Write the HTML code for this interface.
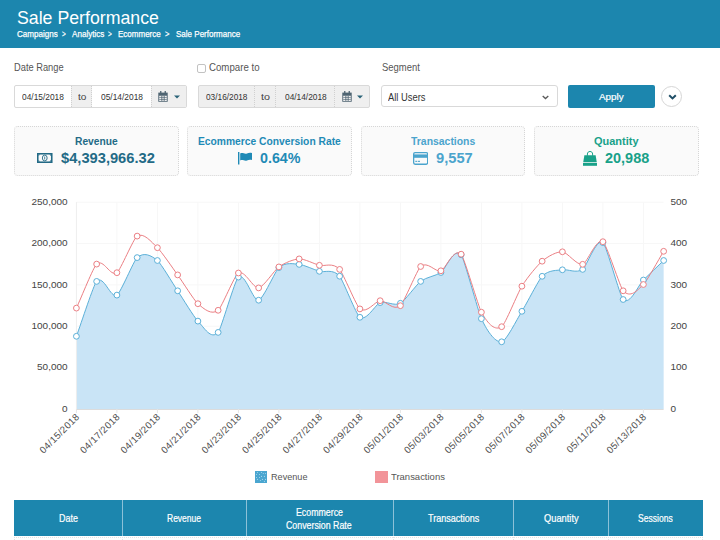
<!DOCTYPE html>
<html><head><meta charset="utf-8"><style>
*{margin:0;padding:0;box-sizing:border-box}
html,body{width:720px;height:540px;overflow:hidden;background:#fff;font-family:"Liberation Sans",sans-serif;color:#555}
.a{position:absolute;white-space:nowrap}
.b{position:absolute}
.ay{font-size:9px;fill:#444;font-family:"Liberation Sans",sans-serif}
.ax{font-size:9.6px;letter-spacing:0.35px;fill:#4d4d4d;font-family:"Liberation Sans",sans-serif}
</style></head><body>
<div class="b" style="left:0;top:0;width:720px;height:48px;background:#1c86ae"></div>

<div class="a" style="left:17.00px;top:5.00px;font-size:18.47px;line-height:25px;color:#fff;transform:scaleX(0.9606);transform-origin:0 0;">Sale Performance</div>
<div class="a" style="left:16.50px;top:27.00px;font-size:9.64px;line-height:13px;color:#fff;transform:scaleX(0.8366);transform-origin:0 0;-webkit-text-stroke:0.25px #fff;">Campaigns</div>
<div class="a" style="left:61.70px;top:27.00px;font-size:9.64px;line-height:13px;color:#fff;transform:scaleX(0.6748);transform-origin:0 0;-webkit-text-stroke:0.25px #fff;">&gt;</div>
<div class="a" style="left:71.80px;top:27.00px;font-size:9.64px;line-height:13px;color:#fff;transform:scaleX(0.8398);transform-origin:0 0;-webkit-text-stroke:0.25px #fff;">Analytics</div>
<div class="a" style="left:107.90px;top:27.00px;font-size:9.64px;line-height:13px;color:#fff;transform:scaleX(0.6748);transform-origin:0 0;-webkit-text-stroke:0.25px #fff;">&gt;</div>
<div class="a" style="left:118.30px;top:27.00px;font-size:9.64px;line-height:13px;color:#fff;transform:scaleX(0.8320);transform-origin:0 0;-webkit-text-stroke:0.25px #fff;">Ecommerce</div>
<div class="a" style="left:164.60px;top:27.00px;font-size:9.64px;line-height:13px;color:#fff;transform:scaleX(0.7814);transform-origin:0 0;-webkit-text-stroke:0.25px #fff;">&gt;</div>
<div class="a" style="left:175.70px;top:27.00px;font-size:9.64px;line-height:13px;color:#fff;transform:scaleX(0.8331);transform-origin:0 0;-webkit-text-stroke:0.25px #fff;">Sale Performance</div>
<div class="a" style="left:14.30px;top:60.00px;font-size:10.58px;line-height:14px;color:#555;transform:scaleX(0.8788);transform-origin:0 0;">Date Range</div>
<div class="b" style="left:197.3px;top:63.8px;width:8.8px;height:8.8px;border:1px solid #c2c2c2;border-radius:2px;background:#fff"></div>
<div class="a" style="left:209.10px;top:60.00px;font-size:10.58px;line-height:14px;color:#555;transform:scaleX(0.9139);transform-origin:0 0;">Compare to</div>
<div class="a" style="left:381.60px;top:60.00px;font-size:10.58px;line-height:14px;color:#555;transform:scaleX(0.8931);transform-origin:0 0;">Segment</div>
<div class="b" style="left:14.3px;top:85.4px;width:172.4px;height:22.2px;border:1px solid #d9d9d9;border-radius:2px;background:#fff"></div>
<div class="b" style="left:71.2px;top:86.4px;width:21px;height:20.2px;background:#efefef;border-left:1px dotted #d0d0d0;border-right:1px dotted #d0d0d0"></div>
<div class="b" style="left:151.1px;top:86.4px;width:34.6px;height:20.2px;background:#efefef;border-left:1px dotted #d0d0d0"></div>
<div class="a" style="left:21.80px;top:91.00px;font-size:9.35px;line-height:13px;color:#333;transform:scaleX(0.8953);transform-origin:0 0;">04/15/2018</div>
<div class="a" style="left:77.60px;top:90.00px;font-size:9.49px;line-height:13px;color:#444;transform:scaleX(1.0617);transform-origin:0 0;">to</div>
<div class="a" style="left:100.70px;top:91.00px;font-size:9.35px;line-height:13px;color:#333;transform:scaleX(0.8974);transform-origin:0 0;">05/14/2018</div>
<svg width="10" height="11" viewBox="0 0 10 11" style="position:absolute;left:158px;top:91px"><g fill="#4f6472"><rect x="2.1" y="0" width="1.3" height="2.6"/><rect x="6.6" y="0" width="1.3" height="2.6"/><rect x="0.3" y="1.6" width="9.4" height="2.4"/><path d="M0.3 4h9.4v6.8H0.3z M1.2 4.8v5.1h7.6V4.8z" fill-rule="evenodd"/><rect x="1.2" y="6.3" width="7.6" height="0.6"/><rect x="1.2" y="8.2" width="7.6" height="0.6"/><rect x="3.1" y="4.8" width="0.6" height="5.1"/><rect x="4.7" y="4.8" width="0.6" height="5.1"/><rect x="6.3" y="4.8" width="0.6" height="5.1"/></g></svg>
<svg width="6" height="4" viewBox="0 0 6 4" style="position:absolute;left:173.5px;top:95px"><path d="M0 0.5h6L3 3.5z" fill="#2a6378"/></svg>
<div class="b" style="left:197.5px;top:85.4px;width:172.5px;height:22.2px;border:1px solid #d9d9d9;border-radius:2px;background:#efefef"></div>
<div class="b" style="left:254.3px;top:86.4px;width:22.2px;height:20.2px;border-left:1px dotted #d0d0d0;border-right:1px dotted #d0d0d0"></div>
<div class="b" style="left:334.3px;top:86.4px;width:1px;height:20.2px;border-left:1px dotted #d0d0d0"></div>
<div class="a" style="left:205.50px;top:91.00px;font-size:9.35px;line-height:13px;color:#333;transform:scaleX(0.8867);transform-origin:0 0;">03/16/2018</div>
<div class="a" style="left:261.00px;top:90.00px;font-size:9.49px;line-height:13px;color:#444;transform:scaleX(1.1375);transform-origin:0 0;">to</div>
<div class="a" style="left:284.50px;top:91.00px;font-size:9.35px;line-height:13px;color:#333;transform:scaleX(0.8921);transform-origin:0 0;">04/14/2018</div>
<svg width="10" height="11" viewBox="0 0 10 11" style="position:absolute;left:341.6px;top:91px"><g fill="#4f6472"><rect x="2.1" y="0" width="1.3" height="2.6"/><rect x="6.6" y="0" width="1.3" height="2.6"/><rect x="0.3" y="1.6" width="9.4" height="2.4"/><path d="M0.3 4h9.4v6.8H0.3z M1.2 4.8v5.1h7.6V4.8z" fill-rule="evenodd"/><rect x="1.2" y="6.3" width="7.6" height="0.6"/><rect x="1.2" y="8.2" width="7.6" height="0.6"/><rect x="3.1" y="4.8" width="0.6" height="5.1"/><rect x="4.7" y="4.8" width="0.6" height="5.1"/><rect x="6.3" y="4.8" width="0.6" height="5.1"/></g></svg>
<svg width="6" height="4" viewBox="0 0 6 4" style="position:absolute;left:357px;top:95px"><path d="M0 0.5h6L3 3.5z" fill="#2a6378"/></svg>
<div class="b" style="left:381.25px;top:85.1px;width:176.4px;height:22.3px;border:1px solid #d9d9d9;border-radius:3px;background:#fff"></div>
<div class="a" style="left:387.90px;top:90.00px;font-size:10.73px;line-height:14px;color:#333;transform:scaleX(0.8734);transform-origin:0 0;">All Users</div>
<svg class="b" style="left:541.6px;top:95.2px" width="7" height="5" viewBox="0 0 7 5"><path d="M0.7 0.9L3.5 3.5L6.3 0.9" fill="none" stroke="#5a5a5a" stroke-width="1.3"/></svg>
<div class="b" style="left:568.3px;top:85.1px;width:86.4px;height:22.5px;background:#1c86ae;border-radius:2px"></div>
<div class="a" style="left:599.40px;top:90.00px;font-size:9.49px;line-height:13px;color:#fff;transform:scaleX(1.0368);transform-origin:0 0;-webkit-text-stroke:0.2px #fff;">Apply</div>
<div class="b" style="left:661.3px;top:85.7px;width:21.2px;height:21.2px;border:1.5px solid #d6d6d6;border-radius:50%;background:#fff"></div>
<svg class="b" style="left:667.7px;top:93.6px" width="9" height="6" viewBox="0 0 9 6"><path d="M1.2 1.2L4.5 4.4L7.8 1.2" fill="none" stroke="#1f4e66" stroke-width="2"/></svg>
<div class="b" style="left:14.0px;top:126px;width:165.0px;height:50.2px;border:1px dotted #d6d6d6;border-radius:4px;background:#fafafa"></div>
<div class="b" style="left:187.0px;top:126px;width:165.0px;height:50.2px;border:1px dotted #d6d6d6;border-radius:4px;background:#fafafa"></div>
<div class="b" style="left:361.0px;top:126px;width:164.0px;height:50.2px;border:1px dotted #d6d6d6;border-radius:4px;background:#fafafa"></div>
<div class="b" style="left:534.0px;top:126px;width:165.0px;height:50.2px;border:1px dotted #d6d6d6;border-radius:4px;background:#fafafa"></div>
<div class="a" style="left:75.00px;top:134.00px;font-size:10.58px;line-height:14px;color:#236a86;font-weight:bold;transform:scaleX(0.9664);transform-origin:0 0;">Revenue</div>
<div class="a" style="left:198.00px;top:134.00px;font-size:10.58px;line-height:14px;color:#1f8ab6;font-weight:bold;transform:scaleX(0.9715);transform-origin:0 0;">Ecommerce Conversion Rate</div>
<div class="a" style="left:410.75px;top:134.00px;font-size:10.58px;line-height:14px;color:#4ba4cd;font-weight:bold;transform:scaleX(0.9848);transform-origin:0 0;">Transactions</div>
<div class="a" style="left:594.25px;top:134.00px;font-size:10.58px;line-height:14px;color:#18a189;font-weight:bold;transform:scaleX(1.0374);transform-origin:0 0;">Quantity</div>
<div class="a" style="left:60.70px;top:148.00px;font-size:14.87px;line-height:20px;color:#236a86;font-weight:bold;transform:scaleX(0.9875);transform-origin:0 0;">$4,393,966.32</div>
<div class="a" style="left:260.00px;top:148.00px;font-size:14.87px;line-height:20px;color:#1f8ab6;font-weight:bold;transform:scaleX(0.9607);transform-origin:0 0;">0.64%</div>
<div class="a" style="left:435.75px;top:148.00px;font-size:14.87px;line-height:20px;color:#4ba4cd;font-weight:bold;transform:scaleX(0.9878);transform-origin:0 0;">9,557</div>
<div class="a" style="left:605.00px;top:148.00px;font-size:14.87px;line-height:20px;color:#18a189;font-weight:bold;transform:scaleX(0.9728);transform-origin:0 0;">20,988</div>
<svg class="b" style="left:37.3px;top:153px" width="15.5" height="10" viewBox="0 0 15.5 10"><g fill="none" stroke="#236a86"><rect x="0.75" y="0.75" width="14" height="8.5" stroke-width="1.6"/><ellipse cx="7.75" cy="5" rx="2.4" ry="2.9" stroke-width="0.9"/></g><g fill="#236a86"><rect x="7.35" y="3.5" width="0.8" height="3"/><path d="M1.5 1.5h1.6L1.5 3.1z M14 1.5h-1.6L14 3.1z M1.5 8.5h1.6L1.5 6.9z M14 8.5h-1.6L14 6.9z"/></g></svg>
<svg class="b" style="left:238.2px;top:152px" width="14" height="12.5" viewBox="0 0 14 12.5"><rect x="0" y="0" width="1.4" height="12.5" fill="#1f8ab6"/><path d="M2.2 1.4C4.5 0 6.5 2.4 9 1.4C10.5 0.8 12 0.6 14 1V8C12 7.4 10.5 7.8 9 8.4C6.5 9.4 4.5 7 2.2 8.4z" fill="#1f8ab6"/></svg>
<svg class="b" style="left:413px;top:152px" width="15.3" height="12.9" viewBox="0 0 15.3 12.9"><rect x="0.65" y="0.65" width="14" height="11.6" rx="1.4" fill="none" stroke="#4ba4cd" stroke-width="1.3"/><rect x="0.65" y="2.4" width="14" height="3.4" fill="#4ba4cd"/><rect x="2.3" y="8.8" width="2" height="1.1" fill="#4ba4cd"/><rect x="5" y="8.8" width="2" height="1.1" fill="#4ba4cd"/></svg>
<svg class="b" style="left:583px;top:151px" width="14" height="14.8" viewBox="0 0 14 14.8"><path d="M4.4 4.8V3C4.4 1.3 5.6 0.5 7 0.5S9.6 1.3 9.6 3V4.8" fill="none" stroke="#18a189" stroke-width="1"/><path d="M1.4 4.2h11.2L13.8 11.2H0.2z" fill="#18a189"/><rect x="0" y="12" width="14" height="2.8" fill="#18a189"/></svg>
<svg width="720" height="300" viewBox="0 190 720 300" style="position:absolute;left:0;top:190px">
<line x1="76.4" y1="409.00" x2="663.6" y2="409.00" stroke="#f7f7f7" stroke-width="1"/>
<line x1="76.4" y1="367.64" x2="663.6" y2="367.64" stroke="#f7f7f7" stroke-width="1"/>
<line x1="76.4" y1="326.28" x2="663.6" y2="326.28" stroke="#f7f7f7" stroke-width="1"/>
<line x1="76.4" y1="284.92" x2="663.6" y2="284.92" stroke="#f7f7f7" stroke-width="1"/>
<line x1="76.4" y1="243.56" x2="663.6" y2="243.56" stroke="#f7f7f7" stroke-width="1"/>
<line x1="76.4" y1="202.20" x2="663.6" y2="202.20" stroke="#f7f7f7" stroke-width="1"/>
<line x1="76.40" y1="202.2" x2="76.40" y2="409.0" stroke="#f7f7f7" stroke-width="1"/>
<line x1="116.90" y1="202.2" x2="116.90" y2="409.0" stroke="#f7f7f7" stroke-width="1"/>
<line x1="157.40" y1="202.2" x2="157.40" y2="409.0" stroke="#f7f7f7" stroke-width="1"/>
<line x1="197.90" y1="202.2" x2="197.90" y2="409.0" stroke="#f7f7f7" stroke-width="1"/>
<line x1="238.40" y1="202.2" x2="238.40" y2="409.0" stroke="#f7f7f7" stroke-width="1"/>
<line x1="278.90" y1="202.2" x2="278.90" y2="409.0" stroke="#f7f7f7" stroke-width="1"/>
<line x1="319.40" y1="202.2" x2="319.40" y2="409.0" stroke="#f7f7f7" stroke-width="1"/>
<line x1="359.90" y1="202.2" x2="359.90" y2="409.0" stroke="#f7f7f7" stroke-width="1"/>
<line x1="400.40" y1="202.2" x2="400.40" y2="409.0" stroke="#f7f7f7" stroke-width="1"/>
<line x1="440.90" y1="202.2" x2="440.90" y2="409.0" stroke="#f7f7f7" stroke-width="1"/>
<line x1="481.40" y1="202.2" x2="481.40" y2="409.0" stroke="#f7f7f7" stroke-width="1"/>
<line x1="521.90" y1="202.2" x2="521.90" y2="409.0" stroke="#f7f7f7" stroke-width="1"/>
<line x1="562.40" y1="202.2" x2="562.40" y2="409.0" stroke="#f7f7f7" stroke-width="1"/>
<line x1="602.90" y1="202.2" x2="602.90" y2="409.0" stroke="#f7f7f7" stroke-width="1"/>
<line x1="643.40" y1="202.2" x2="643.40" y2="409.0" stroke="#f7f7f7" stroke-width="1"/>
<path d="M76.40,336.30 C81.46,322.57 93.67,284.44 96.65,281.40 C103.79,274.14 110.47,298.88 116.90,295.10 C120.59,292.93 133.87,260.41 137.15,257.60 C143.99,251.76 150.92,255.18 157.40,260.50 C161.04,263.48 172.59,283.23 177.65,290.80 C182.71,298.38 193.96,317.06 197.90,321.10 C204.09,327.46 210.89,340.29 218.15,332.40 C221.01,329.29 234.93,279.86 238.40,277.10 C245.05,271.81 253.03,301.52 258.65,300.20 C263.15,299.14 275.37,270.72 278.90,267.60 C285.50,261.77 293.98,263.93 299.15,264.40 C304.10,264.85 314.40,269.84 319.40,271.30 C324.53,272.79 332.69,268.29 339.65,276.20 C342.81,279.79 356.32,314.97 359.90,317.30 C366.45,321.57 375.62,304.17 380.15,302.60 C385.74,300.67 394.37,306.46 400.40,303.30 C404.50,301.16 416.34,284.68 420.65,281.40 C426.46,276.98 435.34,276.15 440.90,272.50 C445.47,269.50 453.92,246.56 461.15,254.80 C464.05,258.11 478.22,311.86 481.40,318.70 C488.34,333.61 496.14,342.81 501.65,341.80 C506.27,340.96 516.59,319.89 521.90,311.30 C526.71,303.52 538.66,279.88 542.15,276.30 C548.79,269.50 557.46,270.64 562.40,269.80 C567.59,268.92 576.33,273.64 582.65,269.40 C586.46,266.84 596.39,237.76 602.90,242.60 C606.52,245.29 619.93,296.53 623.15,299.50 C630.06,305.88 638.34,284.88 643.40,280.00 C648.46,275.12 658.59,265.38 663.65,260.50 L663.65,409.00 L76.40,409.00 Z" fill="#c9e4f6" stroke="none"/>
<path d="M76.40,336.30 C81.46,322.57 93.67,284.44 96.65,281.40 C103.79,274.14 110.47,298.88 116.90,295.10 C120.59,292.93 133.87,260.41 137.15,257.60 C143.99,251.76 150.92,255.18 157.40,260.50 C161.04,263.48 172.59,283.23 177.65,290.80 C182.71,298.38 193.96,317.06 197.90,321.10 C204.09,327.46 210.89,340.29 218.15,332.40 C221.01,329.29 234.93,279.86 238.40,277.10 C245.05,271.81 253.03,301.52 258.65,300.20 C263.15,299.14 275.37,270.72 278.90,267.60 C285.50,261.77 293.98,263.93 299.15,264.40 C304.10,264.85 314.40,269.84 319.40,271.30 C324.53,272.79 332.69,268.29 339.65,276.20 C342.81,279.79 356.32,314.97 359.90,317.30 C366.45,321.57 375.62,304.17 380.15,302.60 C385.74,300.67 394.37,306.46 400.40,303.30 C404.50,301.16 416.34,284.68 420.65,281.40 C426.46,276.98 435.34,276.15 440.90,272.50 C445.47,269.50 453.92,246.56 461.15,254.80 C464.05,258.11 478.22,311.86 481.40,318.70 C488.34,333.61 496.14,342.81 501.65,341.80 C506.27,340.96 516.59,319.89 521.90,311.30 C526.71,303.52 538.66,279.88 542.15,276.30 C548.79,269.50 557.46,270.64 562.40,269.80 C567.59,268.92 576.33,273.64 582.65,269.40 C586.46,266.84 596.39,237.76 602.90,242.60 C606.52,245.29 619.93,296.53 623.15,299.50 C630.06,305.88 638.34,284.88 643.40,280.00 C648.46,275.12 658.59,265.38 663.65,260.50" fill="none" stroke="#5bb0d8" stroke-width="1"/>
<path d="M76.40,308.10 C81.46,297.10 93.49,266.86 96.65,264.10 C103.61,258.01 110.26,277.29 116.90,272.70 C120.39,270.29 133.52,238.34 137.15,236.10 C143.65,232.09 151.40,241.95 157.40,247.70 C161.53,251.65 172.49,267.77 177.65,274.90 C182.62,281.77 194.08,300.36 197.90,303.70 C204.21,309.21 211.41,315.41 218.15,310.30 C221.53,307.74 234.63,275.08 238.40,273.00 C244.76,269.48 253.21,288.72 258.65,287.90 C263.34,287.19 274.57,270.00 278.90,266.90 C284.70,262.75 294.15,259.10 299.15,258.90 C304.28,258.70 314.41,264.01 319.40,265.30 C324.53,266.63 332.74,261.96 339.65,269.40 C342.87,272.86 356.56,306.32 359.90,308.90 C366.69,314.14 375.20,301.09 380.15,300.70 C385.33,300.29 393.53,311.51 400.40,305.70 C403.65,302.96 417.42,269.29 420.65,266.50 C427.54,260.56 435.25,272.52 440.90,270.80 C445.37,269.44 454.05,246.94 461.15,254.20 C464.18,257.29 478.48,306.97 481.40,312.20 C488.60,325.10 495.12,330.89 501.65,326.70 C505.24,324.39 517.69,293.00 521.90,286.20 C527.82,276.63 538.00,264.72 542.15,261.20 C548.13,256.12 557.18,251.40 562.40,251.80 C567.30,252.18 576.98,265.72 582.65,264.30 C587.10,263.19 596.46,237.48 602.90,241.70 C606.58,244.11 620.26,287.75 623.15,290.80 C630.39,298.45 636.85,290.89 643.40,284.50 C646.97,281.02 658.59,259.60 663.65,251.30" fill="none" stroke="#eb7f84" stroke-width="1"/>
<line x1="76.4" y1="409.50" x2="663.6" y2="409.50" stroke="#dcdcdc" stroke-width="1"/>
<line x1="76.4" y1="202.2" x2="76.4" y2="409.0" stroke="#eeeeee" stroke-width="1"/>
<line x1="76.40" y1="409.0" x2="76.40" y2="413.0" stroke="#e6e6e6" stroke-width="1"/>
<line x1="116.90" y1="409.0" x2="116.90" y2="413.0" stroke="#e6e6e6" stroke-width="1"/>
<line x1="157.40" y1="409.0" x2="157.40" y2="413.0" stroke="#e6e6e6" stroke-width="1"/>
<line x1="197.90" y1="409.0" x2="197.90" y2="413.0" stroke="#e6e6e6" stroke-width="1"/>
<line x1="238.40" y1="409.0" x2="238.40" y2="413.0" stroke="#e6e6e6" stroke-width="1"/>
<line x1="278.90" y1="409.0" x2="278.90" y2="413.0" stroke="#e6e6e6" stroke-width="1"/>
<line x1="319.40" y1="409.0" x2="319.40" y2="413.0" stroke="#e6e6e6" stroke-width="1"/>
<line x1="359.90" y1="409.0" x2="359.90" y2="413.0" stroke="#e6e6e6" stroke-width="1"/>
<line x1="400.40" y1="409.0" x2="400.40" y2="413.0" stroke="#e6e6e6" stroke-width="1"/>
<line x1="440.90" y1="409.0" x2="440.90" y2="413.0" stroke="#e6e6e6" stroke-width="1"/>
<line x1="481.40" y1="409.0" x2="481.40" y2="413.0" stroke="#e6e6e6" stroke-width="1"/>
<line x1="521.90" y1="409.0" x2="521.90" y2="413.0" stroke="#e6e6e6" stroke-width="1"/>
<line x1="562.40" y1="409.0" x2="562.40" y2="413.0" stroke="#e6e6e6" stroke-width="1"/>
<line x1="602.90" y1="409.0" x2="602.90" y2="413.0" stroke="#e6e6e6" stroke-width="1"/>
<line x1="643.40" y1="409.0" x2="643.40" y2="413.0" stroke="#e6e6e6" stroke-width="1"/>
<circle cx="76.40" cy="336.30" r="2.9" fill="#fff" stroke="#5bb0d8" stroke-width="1"/>
<circle cx="96.65" cy="281.40" r="2.9" fill="#fff" stroke="#5bb0d8" stroke-width="1"/>
<circle cx="116.90" cy="295.10" r="2.9" fill="#fff" stroke="#5bb0d8" stroke-width="1"/>
<circle cx="137.15" cy="257.60" r="2.9" fill="#fff" stroke="#5bb0d8" stroke-width="1"/>
<circle cx="157.40" cy="260.50" r="2.9" fill="#fff" stroke="#5bb0d8" stroke-width="1"/>
<circle cx="177.65" cy="290.80" r="2.9" fill="#fff" stroke="#5bb0d8" stroke-width="1"/>
<circle cx="197.90" cy="321.10" r="2.9" fill="#fff" stroke="#5bb0d8" stroke-width="1"/>
<circle cx="218.15" cy="332.40" r="2.9" fill="#fff" stroke="#5bb0d8" stroke-width="1"/>
<circle cx="238.40" cy="277.10" r="2.9" fill="#fff" stroke="#5bb0d8" stroke-width="1"/>
<circle cx="258.65" cy="300.20" r="2.9" fill="#fff" stroke="#5bb0d8" stroke-width="1"/>
<circle cx="278.90" cy="267.60" r="2.9" fill="#fff" stroke="#5bb0d8" stroke-width="1"/>
<circle cx="299.15" cy="264.40" r="2.9" fill="#fff" stroke="#5bb0d8" stroke-width="1"/>
<circle cx="319.40" cy="271.30" r="2.9" fill="#fff" stroke="#5bb0d8" stroke-width="1"/>
<circle cx="339.65" cy="276.20" r="2.9" fill="#fff" stroke="#5bb0d8" stroke-width="1"/>
<circle cx="359.90" cy="317.30" r="2.9" fill="#fff" stroke="#5bb0d8" stroke-width="1"/>
<circle cx="380.15" cy="302.60" r="2.9" fill="#fff" stroke="#5bb0d8" stroke-width="1"/>
<circle cx="400.40" cy="303.30" r="2.9" fill="#fff" stroke="#5bb0d8" stroke-width="1"/>
<circle cx="420.65" cy="281.40" r="2.9" fill="#fff" stroke="#5bb0d8" stroke-width="1"/>
<circle cx="440.90" cy="272.50" r="2.9" fill="#fff" stroke="#5bb0d8" stroke-width="1"/>
<circle cx="461.15" cy="254.80" r="2.9" fill="#fff" stroke="#5bb0d8" stroke-width="1"/>
<circle cx="481.40" cy="318.70" r="2.9" fill="#fff" stroke="#5bb0d8" stroke-width="1"/>
<circle cx="501.65" cy="341.80" r="2.9" fill="#fff" stroke="#5bb0d8" stroke-width="1"/>
<circle cx="521.90" cy="311.30" r="2.9" fill="#fff" stroke="#5bb0d8" stroke-width="1"/>
<circle cx="542.15" cy="276.30" r="2.9" fill="#fff" stroke="#5bb0d8" stroke-width="1"/>
<circle cx="562.40" cy="269.80" r="2.9" fill="#fff" stroke="#5bb0d8" stroke-width="1"/>
<circle cx="582.65" cy="269.40" r="2.9" fill="#fff" stroke="#5bb0d8" stroke-width="1"/>
<circle cx="602.90" cy="242.60" r="2.9" fill="#fff" stroke="#5bb0d8" stroke-width="1"/>
<circle cx="623.15" cy="299.50" r="2.9" fill="#fff" stroke="#5bb0d8" stroke-width="1"/>
<circle cx="643.40" cy="280.00" r="2.9" fill="#fff" stroke="#5bb0d8" stroke-width="1"/>
<circle cx="663.65" cy="260.50" r="2.9" fill="#fff" stroke="#5bb0d8" stroke-width="1"/>
<circle cx="76.40" cy="308.10" r="2.9" fill="#fff" stroke="#eb7f84" stroke-width="1"/>
<circle cx="96.65" cy="264.10" r="2.9" fill="#fff" stroke="#eb7f84" stroke-width="1"/>
<circle cx="116.90" cy="272.70" r="2.9" fill="#fff" stroke="#eb7f84" stroke-width="1"/>
<circle cx="137.15" cy="236.10" r="2.9" fill="#fff" stroke="#eb7f84" stroke-width="1"/>
<circle cx="157.40" cy="247.70" r="2.9" fill="#fff" stroke="#eb7f84" stroke-width="1"/>
<circle cx="177.65" cy="274.90" r="2.9" fill="#fff" stroke="#eb7f84" stroke-width="1"/>
<circle cx="197.90" cy="303.70" r="2.9" fill="#fff" stroke="#eb7f84" stroke-width="1"/>
<circle cx="218.15" cy="310.30" r="2.9" fill="#fff" stroke="#eb7f84" stroke-width="1"/>
<circle cx="238.40" cy="273.00" r="2.9" fill="#fff" stroke="#eb7f84" stroke-width="1"/>
<circle cx="258.65" cy="287.90" r="2.9" fill="#fff" stroke="#eb7f84" stroke-width="1"/>
<circle cx="278.90" cy="266.90" r="2.9" fill="#fff" stroke="#eb7f84" stroke-width="1"/>
<circle cx="299.15" cy="258.90" r="2.9" fill="#fff" stroke="#eb7f84" stroke-width="1"/>
<circle cx="319.40" cy="265.30" r="2.9" fill="#fff" stroke="#eb7f84" stroke-width="1"/>
<circle cx="339.65" cy="269.40" r="2.9" fill="#fff" stroke="#eb7f84" stroke-width="1"/>
<circle cx="359.90" cy="308.90" r="2.9" fill="#fff" stroke="#eb7f84" stroke-width="1"/>
<circle cx="380.15" cy="300.70" r="2.9" fill="#fff" stroke="#eb7f84" stroke-width="1"/>
<circle cx="400.40" cy="305.70" r="2.9" fill="#fff" stroke="#eb7f84" stroke-width="1"/>
<circle cx="420.65" cy="266.50" r="2.9" fill="#fff" stroke="#eb7f84" stroke-width="1"/>
<circle cx="440.90" cy="270.80" r="2.9" fill="#fff" stroke="#eb7f84" stroke-width="1"/>
<circle cx="461.15" cy="254.20" r="2.9" fill="#fff" stroke="#eb7f84" stroke-width="1"/>
<circle cx="481.40" cy="312.20" r="2.9" fill="#fff" stroke="#eb7f84" stroke-width="1"/>
<circle cx="501.65" cy="326.70" r="2.9" fill="#fff" stroke="#eb7f84" stroke-width="1"/>
<circle cx="521.90" cy="286.20" r="2.9" fill="#fff" stroke="#eb7f84" stroke-width="1"/>
<circle cx="542.15" cy="261.20" r="2.9" fill="#fff" stroke="#eb7f84" stroke-width="1"/>
<circle cx="562.40" cy="251.80" r="2.9" fill="#fff" stroke="#eb7f84" stroke-width="1"/>
<circle cx="582.65" cy="264.30" r="2.9" fill="#fff" stroke="#eb7f84" stroke-width="1"/>
<circle cx="602.90" cy="241.70" r="2.9" fill="#fff" stroke="#eb7f84" stroke-width="1"/>
<circle cx="623.15" cy="290.80" r="2.9" fill="#fff" stroke="#eb7f84" stroke-width="1"/>
<circle cx="643.40" cy="284.50" r="2.9" fill="#fff" stroke="#eb7f84" stroke-width="1"/>
<circle cx="663.65" cy="251.30" r="2.9" fill="#fff" stroke="#eb7f84" stroke-width="1"/>
<text transform="translate(67.60,409.00) scale(1.110,1)" dy="2.6" text-anchor="end" class="ay">0</text>
<text transform="translate(670.40,409.00) scale(1.110,1)" dy="2.6" text-anchor="start" class="ay">0</text>
<text transform="translate(67.60,367.64) scale(1.110,1)" dy="2.6" text-anchor="end" class="ay">50,000</text>
<text transform="translate(670.40,367.64) scale(1.110,1)" dy="2.6" text-anchor="start" class="ay">100</text>
<text transform="translate(67.60,326.28) scale(1.110,1)" dy="2.6" text-anchor="end" class="ay">100,000</text>
<text transform="translate(670.40,326.28) scale(1.110,1)" dy="2.6" text-anchor="start" class="ay">200</text>
<text transform="translate(67.60,284.92) scale(1.110,1)" dy="2.6" text-anchor="end" class="ay">150,000</text>
<text transform="translate(670.40,284.92) scale(1.110,1)" dy="2.6" text-anchor="start" class="ay">300</text>
<text transform="translate(67.60,243.56) scale(1.110,1)" dy="2.6" text-anchor="end" class="ay">200,000</text>
<text transform="translate(670.40,243.56) scale(1.110,1)" dy="2.6" text-anchor="start" class="ay">400</text>
<text transform="translate(67.60,202.20) scale(1.110,1)" dy="2.6" text-anchor="end" class="ay">250,000</text>
<text transform="translate(670.40,202.20) scale(1.110,1)" dy="2.6" text-anchor="start" class="ay">500</text>
<text transform="translate(77.40,415.00) rotate(-45) scale(1.000,1)" dy="3.6" text-anchor="end" class="ax">04/15/2018</text>
<text transform="translate(117.90,415.00) rotate(-45) scale(1.000,1)" dy="3.6" text-anchor="end" class="ax">04/17/2018</text>
<text transform="translate(158.40,415.00) rotate(-45) scale(1.000,1)" dy="3.6" text-anchor="end" class="ax">04/19/2018</text>
<text transform="translate(198.90,415.00) rotate(-45) scale(1.000,1)" dy="3.6" text-anchor="end" class="ax">04/21/2018</text>
<text transform="translate(239.40,415.00) rotate(-45) scale(1.000,1)" dy="3.6" text-anchor="end" class="ax">04/23/2018</text>
<text transform="translate(279.90,415.00) rotate(-45) scale(1.000,1)" dy="3.6" text-anchor="end" class="ax">04/25/2018</text>
<text transform="translate(320.40,415.00) rotate(-45) scale(1.000,1)" dy="3.6" text-anchor="end" class="ax">04/27/2018</text>
<text transform="translate(360.90,415.00) rotate(-45) scale(1.000,1)" dy="3.6" text-anchor="end" class="ax">04/29/2018</text>
<text transform="translate(401.40,415.00) rotate(-45) scale(1.000,1)" dy="3.6" text-anchor="end" class="ax">05/01/2018</text>
<text transform="translate(441.90,415.00) rotate(-45) scale(1.000,1)" dy="3.6" text-anchor="end" class="ax">05/03/2018</text>
<text transform="translate(482.40,415.00) rotate(-45) scale(1.000,1)" dy="3.6" text-anchor="end" class="ax">05/05/2018</text>
<text transform="translate(522.90,415.00) rotate(-45) scale(1.000,1)" dy="3.6" text-anchor="end" class="ax">05/07/2018</text>
<text transform="translate(563.40,415.00) rotate(-45) scale(1.000,1)" dy="3.6" text-anchor="end" class="ax">05/09/2018</text>
<text transform="translate(603.90,415.00) rotate(-45) scale(1.000,1)" dy="3.6" text-anchor="end" class="ax">05/11/2018</text>
<text transform="translate(644.40,415.00) rotate(-45) scale(1.000,1)" dy="3.6" text-anchor="end" class="ax">05/13/2018</text>
</svg>
<svg class="b" style="left:255px;top:471px" width="12" height="12" viewBox="0 0 12 12"><rect width="12" height="12" fill="#4aa6d0"/><circle cx="2.4" cy="1.5" r="0.55" fill="#a8d6ec"/><circle cx="6.5" cy="1.5" r="0.55" fill="#a8d6ec"/><circle cx="8.3" cy="2.5" r="0.55" fill="#a8d6ec"/><circle cx="10.5" cy="2.5" r="0.55" fill="#a8d6ec"/><circle cx="1.5" cy="3.5" r="0.55" fill="#a8d6ec"/><circle cx="4.5" cy="3.5" r="0.55" fill="#a8d6ec"/><circle cx="6.5" cy="5.4" r="0.55" fill="#a8d6ec"/><circle cx="9.4" cy="5.4" r="0.55" fill="#a8d6ec"/><circle cx="1.5" cy="6.5" r="0.55" fill="#a8d6ec"/><circle cx="4.5" cy="6.5" r="0.55" fill="#a8d6ec"/><circle cx="2.4" cy="8.4" r="0.55" fill="#a8d6ec"/><circle cx="7.5" cy="8.4" r="0.55" fill="#a8d6ec"/><circle cx="10.5" cy="8.4" r="0.55" fill="#a8d6ec"/><circle cx="5.4" cy="9.5" r="0.55" fill="#a8d6ec"/><circle cx="9.4" cy="10.4" r="0.55" fill="#a8d6ec"/></svg>
<div class="a" style="left:270.90px;top:470.00px;font-size:9.80px;line-height:13px;color:#555;transform:scaleX(0.9306);transform-origin:0 0;">Revenue</div>
<div class="b" style="left:375px;top:471px;width:13px;height:12px;background:#f29499"></div>
<div class="a" style="left:390.80px;top:470.00px;font-size:9.80px;line-height:13px;color:#555;transform:scaleX(0.9671);transform-origin:0 0;">Transactions</div>
<div class="b" style="left:14px;top:500.2px;width:689px;height:35.9px;background:#1c86ae"></div>
<div class="b" style="left:122.2px;top:500.2px;width:1px;height:35.9px;background:#8cc1d8"></div>
<div class="b" style="left:245.5px;top:500.2px;width:1px;height:35.9px;background:#8cc1d8"></div>
<div class="b" style="left:393.0px;top:500.2px;width:1px;height:35.9px;background:#8cc1d8"></div>
<div class="b" style="left:513.3px;top:500.2px;width:1px;height:35.9px;background:#8cc1d8"></div>
<div class="b" style="left:608.2px;top:500.2px;width:1px;height:35.9px;background:#8cc1d8"></div>
<div class="a" style="left:58.70px;top:512.00px;font-size:10.26px;line-height:14px;color:#fff;transform:scaleX(0.8718);transform-origin:0 0;-webkit-text-stroke:0.2px #fff;">Date</div>
<div class="a" style="left:166.80px;top:512.00px;font-size:10.26px;line-height:14px;color:#fff;transform:scaleX(0.8275);transform-origin:0 0;-webkit-text-stroke:0.2px #fff;">Revenue</div>
<div class="a" style="left:295.50px;top:506.00px;font-size:10.26px;line-height:14px;color:#fff;transform:scaleX(0.8583);transform-origin:0 0;-webkit-text-stroke:0.2px #fff;">Ecommerce</div>
<div class="a" style="left:286.25px;top:519.00px;font-size:10.26px;line-height:14px;color:#fff;transform:scaleX(0.8600);transform-origin:0 0;-webkit-text-stroke:0.2px #fff;">Conversion Rate</div>
<div class="a" style="left:427.50px;top:512.00px;font-size:10.26px;line-height:14px;color:#fff;transform:scaleX(0.8804);transform-origin:0 0;-webkit-text-stroke:0.2px #fff;">Transactions</div>
<div class="a" style="left:543.60px;top:512.00px;font-size:10.26px;line-height:14px;color:#fff;transform:scaleX(0.9078);transform-origin:0 0;-webkit-text-stroke:0.2px #fff;">Quantity</div>
<div class="a" style="left:638.40px;top:512.00px;font-size:10.26px;line-height:14px;color:#fff;transform:scaleX(0.8331);transform-origin:0 0;-webkit-text-stroke:0.2px #fff;">Sessions</div>
<div class="b" style="left:14px;top:537px;width:689px;height:1px;border-top:1px dotted #e3e3e3"></div>
<div class="b" style="left:14.0px;top:537px;width:1px;height:3px;border-left:1px dotted #e3e3e3"></div>
<div class="b" style="left:122.2px;top:537px;width:1px;height:3px;border-left:1px dotted #e3e3e3"></div>
<div class="b" style="left:245.5px;top:537px;width:1px;height:3px;border-left:1px dotted #e3e3e3"></div>
<div class="b" style="left:393.0px;top:537px;width:1px;height:3px;border-left:1px dotted #e3e3e3"></div>
<div class="b" style="left:513.3px;top:537px;width:1px;height:3px;border-left:1px dotted #e3e3e3"></div>
<div class="b" style="left:608.2px;top:537px;width:1px;height:3px;border-left:1px dotted #e3e3e3"></div>
<div class="b" style="left:702.0px;top:537px;width:1px;height:3px;border-left:1px dotted #e3e3e3"></div>
</body></html>
